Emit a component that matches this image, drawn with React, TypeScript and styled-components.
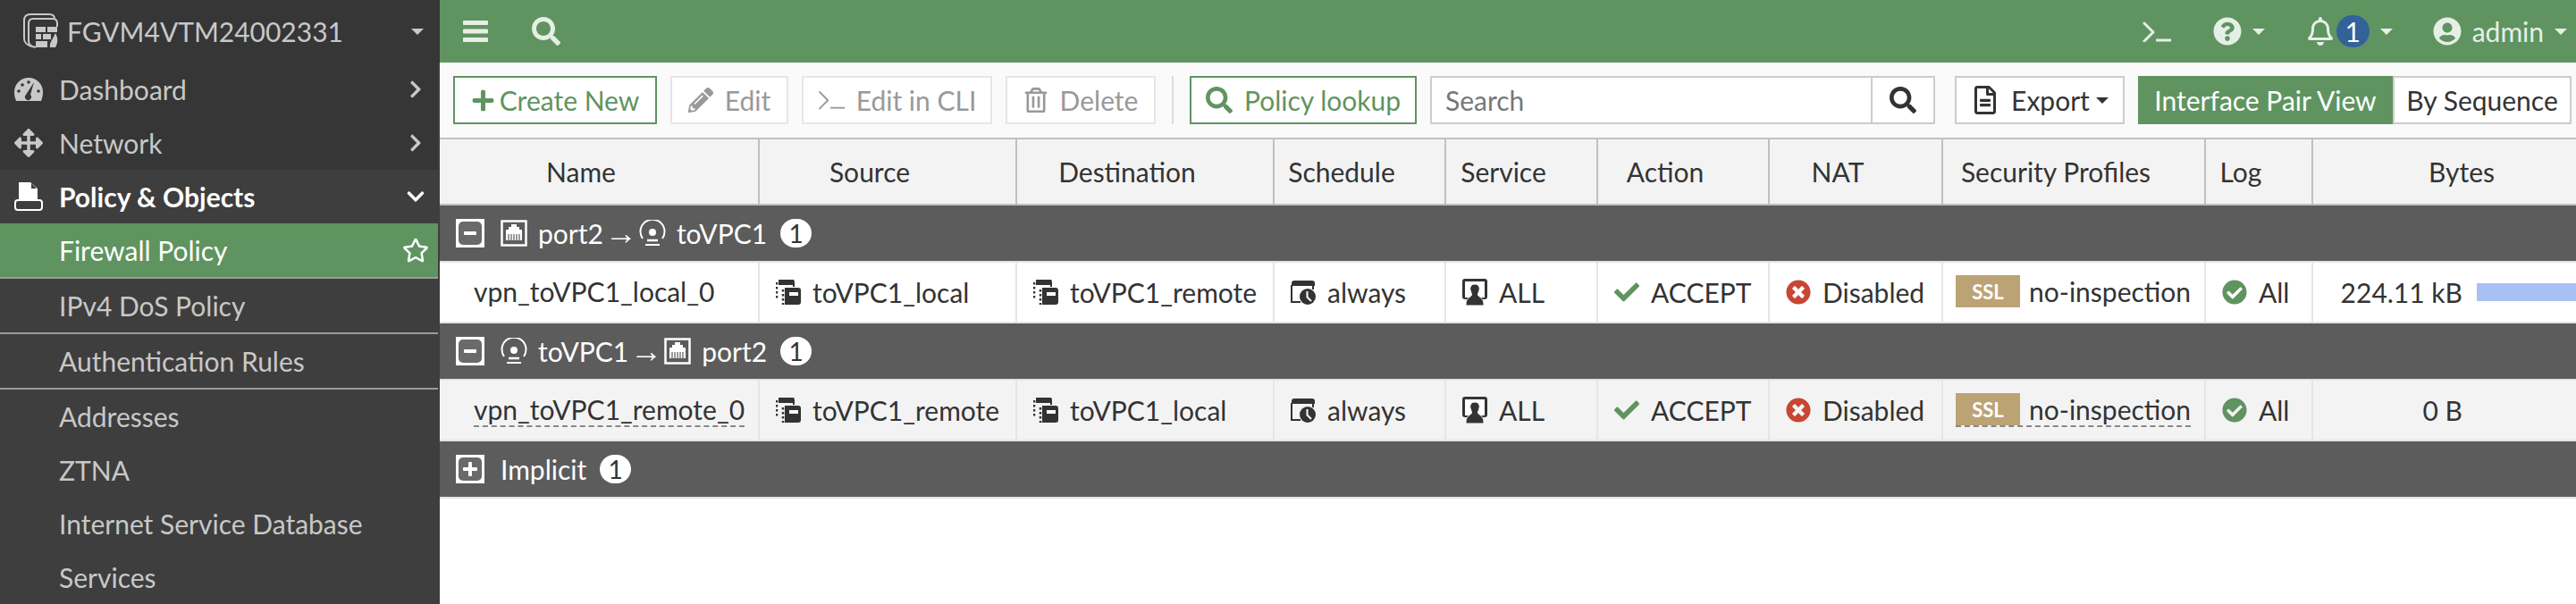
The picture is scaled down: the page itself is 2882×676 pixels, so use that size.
import { FC, ReactNode } from "react";
import styled, { createGlobalStyle } from "styled-components";
import {
    FaArrowsAlt,
    FaCheck,
    FaChevronDown,
    FaChevronRight,
    FaPencilAlt,
    FaPlus,
    FaRegBell,
    FaRegFileAlt,
    FaRegStar,
    FaRegTrashAlt,
    FaQuestionCircle,
    FaSearch,
    FaTimesCircle,
    FaCheckCircle,
    FaUserCircle,
} from "react-icons/fa";

const GREEN = "#5f9460";
const COLUMNS = "358px 288px 288px 192px 170px 192px 194px 294px 120px 372px";

const GlobalStyle = createGlobalStyle`
    html, body {
        margin: 0;
        padding: 0;
        overflow: hidden;
        background: #ffffff;
    }
    body {
        font-family: Lato, "Open Sans", sans-serif;
        font-size: 30px;
        color: #333333;
    }
`;

const Page = styled.div`
    display: flex;
    width: 2882px;
    height: 676px;
    overflow: hidden;
`;

const Sidebar = styled.nav`
    flex: 0 0 492px;
    background-color: #3e3e3e;
    display: flex;
    flex-direction: column;
`;

const SideHeader = styled.div`
    height: 70px;
    display: flex;
    align-items: center;
    padding: 0 18px 0 26px;
    background-color: #363636;
    color: #c8c8c8;
    svg {
        margin-right: 9px;
        flex: none;
    }
    span {
        flex: 1;
    }
`;

const NavItem = styled.div<{ $kind?: "top" | "open" | "active" | "sub"; $line?: boolean }>`
    height: ${({ $line }) => ($line ? 62 : 60)}px;
    width: 490px;
    display: flex;
    align-items: center;
    padding-left: ${({ $kind }) => ($kind === "top" || $kind === "open" ? "16px" : "66px")};
    padding-right: 14px;
    box-sizing: border-box;
    flex: none;
    color: ${({ $kind }) => ($kind === "open" || $kind === "active" ? "#ffffff" : "#c8c8c8")};
    font-weight: ${({ $kind }) => ($kind === "open" ? 700 : 400)};
    background-color: ${({ $kind }) =>
        $kind === "active" ? GREEN : $kind === "top" ? "#363636" : "#3e3e3e"};
    border-bottom: ${({ $line }) => ($line ? "2px solid #9b9b9b" : "none")};
    span {
        flex: 1;
    }
`;

const NavIcon = styled.div`
    width: 32px;
    margin-right: 18px;
    display: flex;
    justify-content: center;
`;

const StarWrap = styled.div`
    display: flex;
    margin-right: -4px;
`;

const Main = styled.main`
    flex: 1;
    min-width: 0;
    display: flex;
    flex-direction: column;
    overflow: hidden;
`;

const TopBar = styled.header`
    height: 70px;
    flex: none;
    background-color: ${GREEN};
    color: #e6efe6;
    display: flex;
    align-items: center;
    padding: 0 10px 0 26px;
`;

const TopSpacer = styled.div`
    flex: 1;
`;

const TopGroup = styled.div<{ $gap?: number; $left?: number }>`
    display: flex;
    align-items: center;
    gap: ${({ $gap }) => $gap ?? 12}px;
    margin-left: ${({ $left }) => $left ?? 0}px;
`;

const Caret = styled.i<{ $size?: number }>`
    display: inline-block;
    width: 0;
    height: 0;
    border-left: ${({ $size }) => $size ?? 7}px solid transparent;
    border-right: ${({ $size }) => $size ?? 7}px solid transparent;
    border-top: ${({ $size }) => $size ?? 7}px solid currentColor;
`;

const CountBadge = styled.span`
    width: 37px;
    height: 36px;
    border-radius: 18px;
    background-color: #336199;
    color: #ffffff;
    display: flex;
    align-items: center;
    justify-content: center;
    margin-left: 2px;
`;

const Toolbar = styled.div`
    height: 84px;
    flex: none;
    background-color: #fafafa;
    border-bottom: 2px solid #c0c0c0;
    display: flex;
    align-items: center;
    padding-left: 15px;
    gap: 15px;
`;

const ToolButton = styled.div<{
    $w: number;
    $gap?: number;
    $variant?: "primary" | "disabled" | "plain" | "on";
}>`
    width: ${({ $w }) => $w}px;
    height: 54px;
    box-sizing: border-box;
    flex: none;
    display: flex;
    align-items: center;
    justify-content: center;
    gap: ${({ $gap }) => $gap ?? 13}px;
    background-color: ${({ $variant }) => ($variant === "on" ? GREEN : "#ffffff")};
    border: 2px solid
        ${({ $variant }) =>
            $variant === "primary" || $variant === "on"
                ? GREEN
                : $variant === "disabled"
                  ? "#e6e6e6"
                  : "#cccccc"};
    color: ${({ $variant }) =>
        $variant === "primary"
            ? GREEN
            : $variant === "disabled"
              ? "#999999"
              : $variant === "on"
                ? "#ffffff"
                : "#333333"};
`;

const ToolDivider = styled.div`
    width: 2px;
    height: 54px;
    background-color: #dddddd;
    margin: 0 3px;
    flex: none;
`;

const SearchGroup = styled.div`
    display: flex;
    flex: none;
    margin-right: 7px;
`;

const SearchInput = styled.div`
    width: 495px;
    height: 54px;
    box-sizing: border-box;
    background-color: #ffffff;
    border: 2px solid #cccccc;
    padding-left: 15px;
    color: #777777;
    display: flex;
    align-items: center;
`;

const SearchButton = styled.div`
    width: 70px;
    height: 54px;
    box-sizing: border-box;
    background-color: #ffffff;
    border: 2px solid #cccccc;
    border-left: none;
    display: flex;
    align-items: center;
    justify-content: center;
    color: #333333;
`;

const ViewSwitch = styled.div`
    display: flex;
    flex: none;
`;

const Table = styled.div`
    display: flex;
    flex-direction: column;
    width: 2468px;
`;

const HeaderRow = styled.div`
    display: grid;
    grid-template-columns: ${COLUMNS};
    height: 74px;
    background-color: #f3f3f3;
    border-bottom: 2px solid #c0c0c0;
    box-sizing: border-box;
`;

const HeaderCell = styled.div`
    display: flex;
    align-items: center;
    justify-content: center;
    padding-right: 40px;
    border-right: 2px solid #c0c0c0;
    color: #333333;
    &:last-child {
        border-right: none;
    }
`;

const GroupRow = styled.div`
    height: 64px;
    box-sizing: border-box;
    background-color: #5c5c5c;
    border-bottom: 2px solid #e5e5e5;
    color: #ffffff;
    display: flex;
    align-items: center;
    padding-left: 18px;
`;

const Toggle = styled.div`
    width: 32px;
    height: 32px;
    box-sizing: border-box;
    padding: 3px;
    background-color: #ffffff;
    margin-right: 18px;
    flex: none;
    display: flex;
`;

const ToggleFace = styled.div`
    flex: 1;
    border-radius: 5px;
    background-color: #6a6a6a;
    display: flex;
    align-items: center;
    justify-content: center;
`;

const GroupLabel = styled.span`
    display: flex;
    align-items: center;
`;

const GroupCount = styled.span`
    width: 35px;
    height: 32px;
    border-radius: 16px;
    margin-left: 15px;
    background-color: #ffffff;
    color: #333333;
    font-size: 28px;
    display: flex;
    align-items: center;
    justify-content: center;
`;

const PolicyRow = styled.div<{ $alt?: boolean }>`
    display: grid;
    grid-template-columns: ${COLUMNS};
    height: 68px;
    box-sizing: border-box;
    background-color: ${({ $alt }) => ($alt ? "#f3f3f3" : "#ffffff")};
    border-bottom: 2px solid #e5e5e5;
`;

const Cell = styled.div<{ $pad?: number }>`
    display: flex;
    align-items: center;
    padding-left: ${({ $pad }) => $pad ?? 18}px;
    border-right: 2px solid #e5e5e5;
    white-space: nowrap;
    overflow: hidden;
    &:last-child {
        border-right: none;
    }
`;

const Dashed = styled.span<{ $on?: boolean }>`
    display: inline-flex;
    align-items: center;
    border-bottom: 2px dashed ${({ $on }) => ($on ? "#888888" : "transparent")};
`;

const CellIcon = styled.span<{ $gap?: number }>`
    display: inline-flex;
    margin-right: ${({ $gap }) => $gap ?? 13}px;
    flex: none;
`;

const SslBadge = styled.span`
    width: 72px;
    height: 36px;
    background-color: #bca375;
    color: #ffffff;
    font-size: 22px;
    font-weight: 700;
    display: inline-flex;
    align-items: center;
    justify-content: center;
    margin-right: 10px;
`;

const BytesValue = styled.span`
    width: 167px;
    text-align: right;
    flex: none;
`;

const BytesBar = styled.div`
    height: 20px;
    width: 180px;
    margin-left: 16px;
    background-color: #a9c0f5;
    flex: none;
`;

const Arrow = styled.span`
    margin: 0 2px;
    font-family: "Liberation Sans", sans-serif;
    font-size: 36px;
    line-height: 30px;
`;

const GapIcon = styled.span<{ $r?: number }>`
    display: inline-flex;
    margin-right: ${({ $r }) => $r ?? 12}px;
`;

const LogoIcon: FC = () => (
    <svg width="40" height="40" viewBox="0 0 40 40" fill="none" stroke="#c8c8c8" strokeWidth="2">
        <path d="M9 37 C4 35 1 33 1 28 V8 C1 3 3 1 8 1 H29 C33 1 35 3 35 6" />
        <path d="M14 38 C8 37 6 35 6 31 V11 C6 7 8 6 11 6 H33 C36 6 38 8 38 11 V15" />
        <g fill="#c8c8c8" stroke="none">
            <rect x="14" y="15" width="11" height="6" />
            <rect x="27" y="15" width="11" height="6" />
            <rect x="14" y="23" width="6" height="6" />
            <rect x="22" y="23" width="9" height="6" />
            <rect x="14" y="31" width="13" height="7" />
            <path d="M36 22 C39 27 39 33 36 38 H30 C29 33 33 29 36 22 Z" />
        </g>
    </svg>
);

const GaugeIcon: FC = () => (
    <svg width="32" height="26" viewBox="0 0 32 26" fill="#c8c8c8">
        <path d="M16 0 C7 0 0 7 0 16 C0 20 1 23 2 26 H30 C31 23 32 20 32 16 C32 7 25 0 16 0 Z" />
        <g fill="#363636">
            <circle cx="5" cy="15" r="1.8" />
            <circle cx="9" cy="8" r="1.8" />
            <circle cx="16" cy="5" r="1.8" />
            <circle cx="27" cy="15" r="1.8" />
            <path d="M22 5 L18 19 A3.5 3.5 0 1 1 13 19 Z" />
        </g>
    </svg>
);

const PolicyIcon: FC = () => (
    <svg width="32" height="32" viewBox="0 0 32 32">
        <path d="M5 0 H18 L26 7 V20 H5 Z" fill="#ffffff" />
        <path d="M19 1 L25 7 H19 Z" fill="#3e3e3e" />
        <rect x="1" y="20" width="30" height="11" rx="3" fill="#3e3e3e" stroke="#ffffff" strokeWidth="2" />
    </svg>
);

const HamburgerIcon: FC = () => (
    <svg width="28" height="24" viewBox="0 0 28 24" fill="currentColor">
        <rect y="0" width="28" height="5" rx="1" />
        <rect y="9.5" width="28" height="5" rx="1" />
        <rect y="19" width="28" height="5" rx="1" />
    </svg>
);

const PromptIcon: FC<{ size?: number; weight?: number }> = ({ size = 32, weight = 3 }) => (
    <svg width={size} height={(size * 23) / 32} viewBox="0 0 32 23" fill="none" stroke="currentColor" strokeWidth={weight}>
        <path d="M2 2 L12 12 L2 22" strokeLinecap="round" strokeLinejoin="round" />
        <path d="M15 21 H32" />
    </svg>
);

const PortIcon: FC = () => (
    <svg width="30" height="30" viewBox="0 0 30 30">
        <rect x="1.500" y="1.500" width="27" height="27" fill="none" stroke="#ffffff" strokeWidth="2.5" />
        <path d="M12 5 H18 V8 H21 V11 H24 V23 H6 V11 H9 V8 H12 Z" fill="#ffffff" />
        <path d="M9 16 V23 M12 16 V23 M15 16 V23 M18 16 V23 M21 16 V23" stroke="#5c5c5c" strokeWidth="1.2" />
    </svg>
);

const TunnelIcon: FC = () => (
    <svg width="30" height="30" viewBox="0 0 30 30" fill="none" stroke="#ffffff" strokeWidth="2">
        <path d="M4 21 A13.500 13.500 0 1 1 26 21" />
        <circle cx="15" cy="14" r="4" fill="#ffffff" stroke="none" />
        <path d="M9 23 H21" strokeWidth="2.5" />
        <path d="M7 28 H23" />
    </svg>
);

const AddressIcon: FC = () => (
    <svg width="28" height="28" viewBox="0 0 28 28">
        <path d="M3 0 H17 A3 3 0 0 1 20 3 V8" fill="none" stroke="#333333" strokeWidth="2" />
        <rect x="3" y="1" width="16" height="5" fill="#333333" />
        <path d="M1 3 V22 M8 11 V28" stroke="#333333" strokeWidth="2.5" strokeDasharray="2.500 2.500" />
        <path d="M10 9 H25 A3 3 0 0 1 28 12 V25 A3 3 0 0 1 25 28 H10 Z" fill="#333333" />
        <rect x="15" y="14" width="10" height="4" fill="#ffffff" />
    </svg>
);

const ScheduleIcon: FC = () => (
    <svg width="28" height="28" viewBox="0 0 28 28">
        <path d="M1 4 A3 3 0 0 1 4 1 H24 A3 3 0 0 1 27 4 V7 H1 Z" fill="#333333" />
        <path d="M1 6 V25 H11 M25 6 V11" fill="none" stroke="#333333" strokeWidth="2" />
        <circle cx="19" cy="19" r="9" fill="#333333" />
        <path d="M18.500 13 V19.500 L23 24" fill="none" stroke="#ffffff" strokeWidth="2" />
    </svg>
);

const ServiceIcon: FC = () => (
    <svg width="28" height="30" viewBox="0 0 28 30">
        <path d="M3 0 H25 A3 3 0 0 1 28 3 V20 A3 3 0 0 1 25 23 H3 A3 3 0 0 1 0 20 V3 A3 3 0 0 1 3 0 Z" fill="#333333" />
        <rect x="3" y="3" width="22" height="18" fill="#ffffff" />
        <path d="M14 6 C18 6 20 9 19 13 C18.500 15 17.500 16 17.500 18 C17.500 20 24 21 24 28 V30 H4 V28 C4 21 10.500 20 10.500 18 C10.500 16 9.500 15 9 13 C8 9 10 6 14 6 Z" fill="#333333" stroke="#ffffff" strokeWidth="1" />
    </svg>
);

const Address: FC<{ children: ReactNode }> = ({ children }) => (
    <Cell>
        <CellIcon>
            <AddressIcon />
        </CellIcon>
        {children}
    </Cell>
);

const Policy: FC<{ name: string; src: string; dst: string; bytes: string; bar?: boolean; alt?: boolean }> = ({
    name,
    src,
    dst,
    bytes,
    bar,
    alt,
}) => (
    <PolicyRow $alt={alt}>
        <Cell $pad={38}>
            <Dashed $on={alt}>{name}</Dashed>
        </Cell>
        <Address>{src}</Address>
        <Address>{dst}</Address>
        <Cell>
            <CellIcon>
                <ScheduleIcon />
            </CellIcon>
            always
        </Cell>
        <Cell>
            <CellIcon>
                <ServiceIcon />
            </CellIcon>
            ALL
        </Cell>
        <Cell>
            <CellIcon>
                <FaCheck size={28} color={GREEN} />
            </CellIcon>
            ACCEPT
        </Cell>
        <Cell>
            <CellIcon>
                <FaTimesCircle size={28} color="#c84634" />
            </CellIcon>
            Disabled
        </Cell>
        <Cell $pad={14}>
            <Dashed $on={alt}>
                <SslBadge>SSL</SslBadge>
                no-inspection
            </Dashed>
        </Cell>
        <Cell>
            <CellIcon>
                <FaCheckCircle size={28} color={GREEN} />
            </CellIcon>
            All
        </Cell>
        <Cell $pad={0}>
            <BytesValue>{bytes}</BytesValue>
            {bar && <BytesBar />}
        </Cell>
    </PolicyRow>
);

const MINUS = (
    <svg width="14" height="4" viewBox="0 0 14 4">
        <rect width="14" height="4" rx="1" fill="#ffffff" />
    </svg>
);
const PLUS = (
    <svg width="16" height="16" viewBox="0 0 16 16" fill="#ffffff">
        <rect y="6" width="16" height="4" rx="1" />
        <rect x="6" width="4" height="16" rx="1" />
    </svg>
);

const HEADERS = ["Name", "Source", "Destination", "Schedule", "Service", "Action", "NAT", "Security Profiles", "Log", "Bytes"];

export default function App() {
    return (
        <Page>
            <GlobalStyle />
            <Sidebar>
                <SideHeader>
                    <LogoIcon />
                    <span>FGVM4VTM24002331</span>
                    <Caret />
                </SideHeader>
                <NavItem $kind="top">
                    <NavIcon><GaugeIcon /></NavIcon>
                    <span>Dashboard</span>
                    <FaChevronRight size={22} />
                </NavItem>
                <NavItem $kind="top">
                    <NavIcon><FaArrowsAlt size={32} /></NavIcon>
                    <span>Network</span>
                    <FaChevronRight size={22} />
                </NavItem>
                <NavItem $kind="open">
                    <NavIcon><PolicyIcon /></NavIcon>
                    <span>Policy &amp; Objects</span>
                    <FaChevronDown size={22} />
                </NavItem>
                <NavItem $kind="active" $line>
                    <span>Firewall Policy</span>
                    <StarWrap><FaRegStar size={30} /></StarWrap>
                </NavItem>
                <NavItem $kind="sub" $line>
                    <span>IPv4 DoS Policy</span>
                </NavItem>
                <NavItem $kind="sub" $line>
                    <span>Authentication Rules</span>
                </NavItem>
                <NavItem $kind="sub"><span>Addresses</span></NavItem>
                <NavItem $kind="sub"><span>ZTNA</span></NavItem>
                <NavItem $kind="sub"><span>Internet Service Database</span></NavItem>
                <NavItem $kind="sub"><span>Services</span></NavItem>
            </Sidebar>
            <Main>
                <TopBar>
                    <HamburgerIcon />
                    <TopGroup $left={49}>
                        <FaSearch size={32} />
                    </TopGroup>
                    <TopSpacer />
                    <PromptIcon />
                    <TopGroup $left={47}>
                        <FaQuestionCircle size={32} />
                        <Caret />
                    </TopGroup>
                    <TopGroup $left={46} $gap={0}>
                        <FaRegBell size={32} />
                        <CountBadge>1</CountBadge>
                        <TopGroup $left={12}><Caret /></TopGroup>
                    </TopGroup>
                    <TopGroup $left={45}>
                        <FaUserCircle size={32} />
                        admin
                        <Caret />
                    </TopGroup>
                </TopBar>
                <Toolbar>
                    <ToolButton $w={228} $gap={5} $variant="primary">
                        <FaPlus size={27} />
                        Create New
                    </ToolButton>
                    <ToolButton $w={132} $variant="disabled">
                        <FaPencilAlt size={28} />
                        Edit
                    </ToolButton>
                    <ToolButton $w={213} $variant="disabled">
                        <PromptIcon size={30} weight={2} />
                        Edit in CLI
                    </ToolButton>
                    <ToolButton $w={168} $variant="disabled">
                        <FaRegTrashAlt size={28} />
                        Delete
                    </ToolButton>
                    <ToolDivider />
                    <ToolButton $w={254} $variant="primary">
                        <FaSearch size={30} />
                        Policy lookup
                    </ToolButton>
                    <SearchGroup>
                        <SearchInput>Search</SearchInput>
                        <SearchButton><FaSearch size={30} /></SearchButton>
                    </SearchGroup>
                    <ToolButton $w={190} $variant="plain">
                        <FaRegFileAlt size={32} />
                        <TopGroup $gap={7}>
                            Export
                            <Caret />
                        </TopGroup>
                    </ToolButton>
                    <ViewSwitch>
                        <ToolButton $w={285} $variant="on">Interface Pair View</ToolButton>
                        <ToolButton $w={200} $variant="plain">By Sequence</ToolButton>
                    </ViewSwitch>
                </Toolbar>
                <Table>
                    <HeaderRow>
                        {HEADERS.map((h) => (
                            <HeaderCell key={h}>{h}</HeaderCell>
                        ))}
                    </HeaderRow>
                    <GroupRow>
                        <Toggle><ToggleFace>{MINUS}</ToggleFace></Toggle>
                        <GroupLabel>
                            <GapIcon><PortIcon /></GapIcon>
                            port2
                            <Arrow>→</Arrow>
                            <GapIcon><TunnelIcon /></GapIcon>
                            toVPC1
                        </GroupLabel>
                        <GroupCount>1</GroupCount>
                    </GroupRow>
                    <Policy name="vpn_toVPC1_local_0" src="toVPC1_local" dst="toVPC1_remote" bytes="224.11 kB" bar />
                    <GroupRow>
                        <Toggle><ToggleFace>{MINUS}</ToggleFace></Toggle>
                        <GroupLabel>
                            <GapIcon><TunnelIcon /></GapIcon>
                            toVPC1
                            <Arrow>→</Arrow>
                            <GapIcon><PortIcon /></GapIcon>
                            port2
                        </GroupLabel>
                        <GroupCount>1</GroupCount>
                    </GroupRow>
                    <Policy name="vpn_toVPC1_remote_0" src="toVPC1_remote" dst="toVPC1_local" bytes="0 B" alt />
                    <GroupRow>
                        <Toggle><ToggleFace>{PLUS}</ToggleFace></Toggle>
                        <GroupLabel>Implicit</GroupLabel>
                        <GroupCount>1</GroupCount>
                    </GroupRow>
                </Table>
            </Main>
        </Page>
    );
}
